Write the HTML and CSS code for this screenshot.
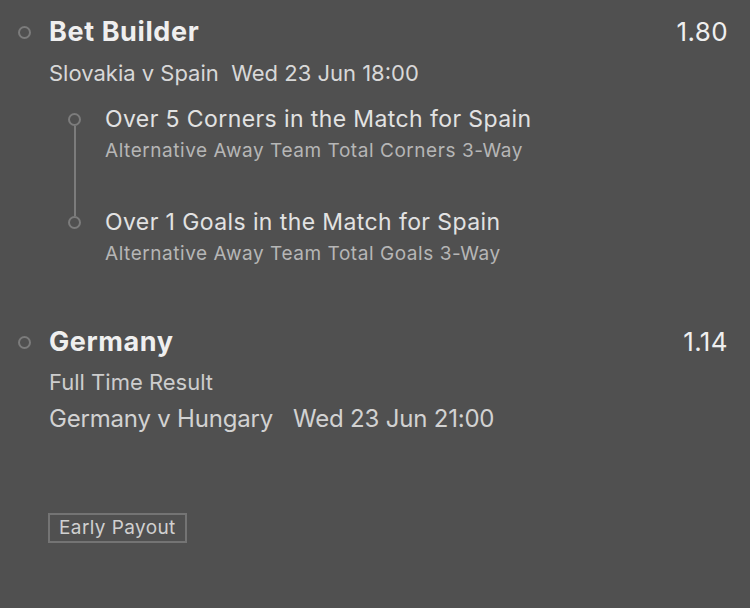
FILE: index.html
```html
<!DOCTYPE html>
<html lang="en">

<head>
    <meta charset="UTF-8">
    <meta name="viewport" content="width=device-width, initial-scale=1.0">
    <title>Bet Slip</title>
    <link rel="stylesheet" href="styles.css">
</head>

<body>
    <div class="slip">
        <!-- Bet builder with two legs -->
        <div class="bet">
            <div class="bet-marker"><span class="dot"></span></div>
            <div class="bet-body">
                <div class="bet-head">
                    <span class="bet-title">Bet Builder</span>
                    <span class="bet-odds">1.80</span>
                </div>
                <div class="bet-event">Slovakia v Spain&nbsp; Wed 23 Jun 18:00</div>

                <div class="legs">
                    <div class="leg leg-first">
                        <div class="leg-marker"><span class="dot"></span><span class="leg-line"></span></div>
                        <div class="leg-body">
                            <div class="leg-title">Over 5 Corners in the Match for Spain</div>
                            <div class="leg-market">Alternative Away Team Total Corners 3-Way</div>
                        </div>
                    </div>
                    <div class="leg">
                        <div class="leg-marker"><span class="dot"></span></div>
                        <div class="leg-body">
                            <div class="leg-title">Over 1 Goals in the Match for Spain</div>
                            <div class="leg-market">Alternative Away Team Total Goals 3-Way</div>
                        </div>
                    </div>
                </div>
            </div>
        </div>

        <!-- Single -->
        <div class="bet bet-single">
            <div class="bet-marker"><span class="dot"></span></div>
            <div class="bet-body">
                <div class="bet-head">
                    <span class="bet-title">Germany</span>
                    <span class="bet-odds">1.14</span>
                </div>
                <div class="bet-market">Full Time Result</div>
                <div class="bet-fixture">Germany v Hungary<span class="fixture-time">Wed 23 Jun 21:00</span></div>
                <span class="tag">Early Payout</span>
            </div>
        </div>
    </div>
</body>

</html>
```

FILE: styles.css
```css
body {
    margin: 0;
    background-color: #505050;
    font-family: 'Inter', 'Noto Sans', sans-serif;
    color: #efefef;
}

.slip {
    padding: 16px 22px 0 0;
}

.bet {
    display: flex;
}

.bet-marker {
    width: 48px;
    display: flex;
    justify-content: center;
    padding-top: 10px;
}

.dot {
    display: block;
    width: 9px;
    height: 9px;
    border: 2px solid #7c7c7c;
    border-radius: 50%;
    flex-shrink: 0;
}

.bet-body {
    flex: 1;
    padding-left: 1px;
}

.bet-head {
    display: flex;
    justify-content: space-between;
    align-items: baseline;
    line-height: 32px;
}

.bet-title {
    font-size: 27px;
    font-weight: 700;
    letter-spacing: 0.6px;
}

.bet-odds {
    font-size: 26px;
    font-weight: 400;
    letter-spacing: 0.4px;
}

.bet-event {
    font-size: 22px;
    line-height: 26px;
    color: #d8d8d8;
    margin-top: 12px;
}

.legs {
    margin-top: 19px;
}

.leg {
    display: flex;
}

.leg-first .leg-body {
    padding-bottom: 45px;
}

.leg-marker {
    width: 56px;
    display: flex;
    flex-direction: column;
    align-items: flex-start;
    padding-left: 19px;
    box-sizing: border-box;
    padding-top: 8px;
}

.leg-line {
    display: block;
    width: 2px;
    flex: 1;
    margin-left: 5.5px;
    margin-bottom: -8px;
    background-color: #7c7c7c;
}

.leg-title {
    font-size: 23px;
    line-height: 28px;
    letter-spacing: 0.4px;
    color: #e2e2e2;
}

.leg-market {
    font-size: 19px;
    line-height: 24px;
    letter-spacing: 0.55px;
    color: #b6b6b6;
    margin-top: 6px;
}

.bet-single {
    margin-top: 60px;
}

.bet-market {
    font-size: 22px;
    line-height: 26px;
    color: #cdcdcd;
    margin-top: 11px;
}

.bet-fixture {
    font-size: 24px;
    line-height: 28px;
    letter-spacing: -0.2px;
    color: #d2d2d2;
    margin-top: 10px;
}

.fixture-time {
    margin-left: 20px;
}

.tag {
    display: inline-block;
    margin-top: 80px;
    margin-left: -1px;
    padding: 2px 9px;
    border: 2px solid #747474;
    font-size: 19px;
    line-height: 22px;
    letter-spacing: 0.4px;
    color: #d0d0d0;
}
```
